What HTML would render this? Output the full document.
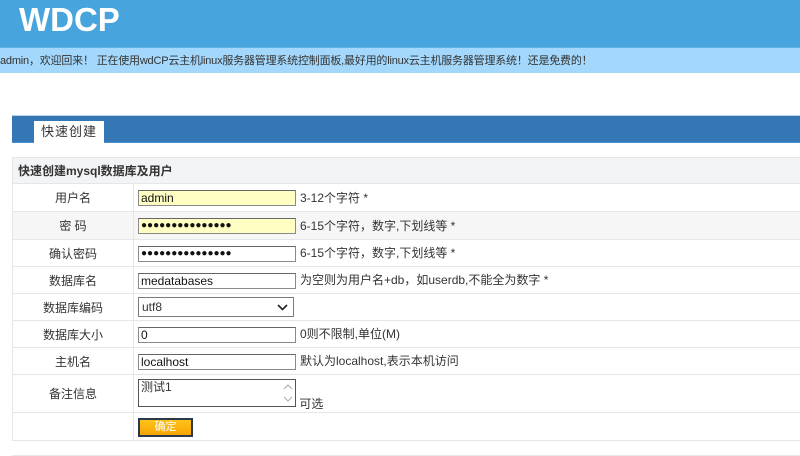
<!DOCTYPE html>
<html><head><meta charset="utf-8">
<style>
*{margin:0;padding:0;box-sizing:border-box}
body{width:800px;height:456px;overflow:hidden;background:#fff;font-family:"Liberation Sans","Noto Sans CJK SC",sans-serif;font-size:12px;color:#333;position:relative}
.hd{position:absolute;left:0;top:0;width:800px;height:47px;background:#48a4dc}
.logo{position:absolute;left:19px;top:1px;font-size:33px;font-weight:bold;color:#fff;font-family:"Liberation Sans",sans-serif}
.strip{position:absolute;left:0;top:47px;width:800px;height:26px;background:#a3d8fc;border-top:1px solid #5fb2e6;font-size:11px;letter-spacing:-0.2px;line-height:26px;color:#333;white-space:nowrap}
.bar{position:absolute;left:12px;top:115px;width:788px;height:28px;background:#3378b5;border-top:1px solid #bcd4ea;border-bottom:1px solid #4a8fcf}
.tab{position:absolute;left:22px;top:5px;width:70px;height:23px;background:#fff;font-size:13px;line-height:22px;text-align:center;color:#333;letter-spacing:1px}
table{position:absolute;left:12px;top:157px;width:790px;border-collapse:collapse}
td{border:1px solid #e4e6ea;height:27px;padding:0}
td.l{width:121px;text-align:center;font-size:12px}
td.r{padding-left:4px;white-space:nowrap;font-size:12px}
tr.h td{background:#f3f4f6;height:26px;font-weight:bold;padding-left:5px}
tr.g td{background:#f6f6f6}
.in{display:inline-block;vertical-align:middle;width:158px;height:16px;border:1px solid #8a8a8a;border-top-color:#666;background:#fff;font-size:12px;line-height:14px;padding-left:2px;margin-right:4px;color:#111}
.y{background:#ffffc4}
.dots{font-size:10px;letter-spacing:0px;line-height:14px;font-weight:bold}
.sel{display:inline-block;vertical-align:middle;width:156px;height:20px;border:1px solid #7a7a7a;background:#fff;line-height:18px;padding-left:3px;position:relative}
.ta{display:inline-block;vertical-align:top;width:158px;height:28px;border:1px solid #555;background:#fff;padding-left:2px;line-height:14px;position:relative;margin-top:4px}
.btn{display:inline-block;width:55px;height:19px;background:linear-gradient(#ffc21a,#f6a500);border:2px solid #2a3a4a;color:#fff;text-align:center;line-height:15px;font-size:11px;margin-top:2px}
.bot{position:absolute;left:12px;top:455px;width:790px;height:1px;background:#e8e8ec}
</style></head><body>
<div class="hd"><div class="logo">WDCP</div></div>
<div class="strip">admin，欢迎回来！ 正在使用wdCP云主机linux服务器管理系统控制面板,最好用的linux云主机服务器管理系统！还是免费的！</div>
<div class="bar"><div class="tab">快速创建</div></div>
<table>
<tr class="h"><td colspan="2">快速创建mysql数据库及用户</td></tr>
<tr><td class="l" style="height:28px">用户名</td><td class="r"><span class="in y">admin</span>3-12个字符 *</td></tr>
<tr class="g"><td class="l" style="height:28px">密 码</td><td class="r"><span class="in y dots">●●●●●●●●●●●●●●●</span>6-15个字符，数字,下划线等 *</td></tr>
<tr><td class="l">确认密码</td><td class="r"><span class="in dots">●●●●●●●●●●●●●●●</span>6-15个字符，数字,下划线等 *</td></tr>
<tr><td class="l">数据库名</td><td class="r"><span class="in">medatabases</span>为空则为用户名+db，如userdb,不能全为数字 *</td></tr>
<tr><td class="l">数据库编码</td><td class="r"><span class="sel">utf8<svg style="position:absolute;right:5px;top:6px" width="11" height="7" viewBox="0 0 11 7"><path d="M1 1l4.5 4.5L10 1" fill="none" stroke="#222" stroke-width="1.6"/></svg></span></td></tr>
<tr><td class="l">数据库大小</td><td class="r"><span class="in">0</span>0则不限制,单位(M)</td></tr>
<tr><td class="l">主机名</td><td class="r"><span class="in">localhost</span>默认为localhost,表示本机访问</td></tr>
<tr><td class="l" style="height:38px">备注信息</td><td class="r" style="vertical-align:top"><span class="ta">测试1<svg style="position:absolute;right:2px;top:2px" width="10" height="22" viewBox="0 0 10 22"><path d="M1 7l4-4 4 4M1 15l4 4 4-4" fill="none" stroke="#aaa" stroke-width="1"/></svg></span> <span style="display:inline-block;margin-top:20px">可选</span></td></tr>
<tr><td class="l" style="height:28px"></td><td class="r"><span class="btn">确定</span></td></tr>
</table>
<div class="bot"></div>
</body></html>
